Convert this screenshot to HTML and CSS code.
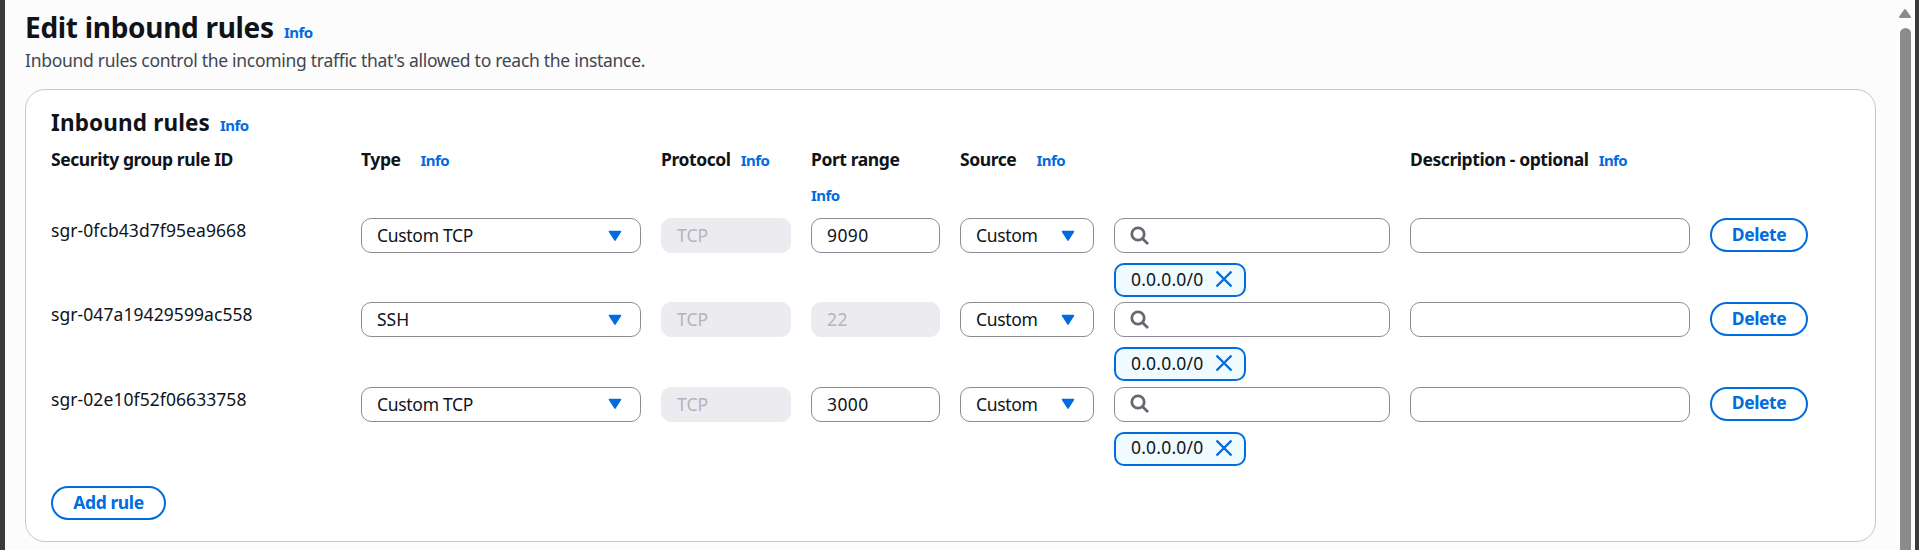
FILE: index.html
```
<!DOCTYPE html>
<html lang="en">
<head>
<meta charset="utf-8">
<title>Edit inbound rules</title>
<link rel="stylesheet" href="styles.css">
</head>
<body>
<svg class="defs" width="0" height="0">
  <symbol id="caret" viewBox="0 0 14 12"><path d="M1.5 1.5h11L7 10.2z"/></symbol>
  <symbol id="search" viewBox="0 0 20 20"><circle cx="8" cy="8" r="6.2"/><path d="M12.4 12.4l5.6 5.6"/></symbol>
  <symbol id="close" viewBox="0 0 18 18"><path d="M1.5 1.5l15 15M16.5 1.5l-15 15"/></symbol>
</svg>
<div class="window">
  <main class="page">
    <header class="page-header">
      <h1>Edit inbound rules</h1><a class="info">Info</a>
    </header>
    <p class="lead">Inbound rules control the incoming traffic that's allowed to reach the instance.</p>
    <section class="card">
      <div class="card-header"><h2>Inbound rules</h2><a class="info">Info</a></div>
      <div class="grid heads">
        <div class="head"><b>Security group rule ID</b></div>
        <div class="head wide"><b>Type</b><a class="info">Info</a></div>
        <div class="head"><b>Protocol</b><a class="info">Info</a></div>
        <div class="head stacked"><b>Port range</b><a class="info">Info</a></div>
        <div class="head wide"><b>Source</b><a class="info">Info</a></div>
        <div></div>
        <div class="head"><b>Description - optional</b><a class="info">Info</a></div>
      </div>
      <div class="grid rule">
        <div class="rule-id">sgr-0fcb43d7f95ea9668</div>
        <div class="field select"><span class="phrase">Custom TCP</span><svg class="caret"><use href="#caret"/></svg></div>
        <div class="field disabled"><span>TCP</span></div>
        <div class="field"><span class="num">9090</span></div>
        <div class="field select"><span class="word">Custom</span><svg class="caret"><use href="#caret"/></svg></div>
        <div class="source">
          <div class="field"><svg class="search"><use href="#search"/></svg></div>
          <div class="chip"><span>0.0.0.0/0</span><svg class="close"><use href="#close"/></svg></div>
        </div>
        <div class="field"></div>
        <button class="btn">Delete</button>
      </div>
      <div class="grid rule">
        <div class="rule-id">sgr-047a19429599ac558</div>
        <div class="field select"><span>SSH</span><svg class="caret"><use href="#caret"/></svg></div>
        <div class="field disabled"><span>TCP</span></div>
        <div class="field disabled"><span class="num">22</span></div>
        <div class="field select"><span class="word">Custom</span><svg class="caret"><use href="#caret"/></svg></div>
        <div class="source">
          <div class="field"><svg class="search"><use href="#search"/></svg></div>
          <div class="chip"><span>0.0.0.0/0</span><svg class="close"><use href="#close"/></svg></div>
        </div>
        <div class="field"></div>
        <button class="btn">Delete</button>
      </div>
      <div class="grid rule">
        <div class="rule-id">sgr-02e10f52f06633758</div>
        <div class="field select"><span class="phrase">Custom TCP</span><svg class="caret"><use href="#caret"/></svg></div>
        <div class="field disabled"><span>TCP</span></div>
        <div class="field"><span class="num">3000</span></div>
        <div class="field select"><span class="word">Custom</span><svg class="caret"><use href="#caret"/></svg></div>
        <div class="source">
          <div class="field"><svg class="search"><use href="#search"/></svg></div>
          <div class="chip"><span>0.0.0.0/0</span><svg class="close"><use href="#close"/></svg></div>
        </div>
        <div class="field"></div>
        <button class="btn">Delete</button>
      </div>
      <button class="btn add">Add rule</button>
    </section>
  </main>
  <div class="scrollbar">
    <svg class="arrow" viewBox="0 0 14 11"><path d="M7 2L12 9H2z"/></svg>
    <div class="thumb"></div>
  </div>
</div>
</body>
</html>
```
FILE: styles.css
```
* { box-sizing: border-box; }
html, body { margin: 0; height: 550px; overflow: hidden; }
body {
  font: 17.5px/25px "Noto Sans", "Open Sans", sans-serif;
  color: #0f141a;
  background: #3b3939;
}
h1, h2, p { margin: 0; }
.defs { display: none; }
.window {
  display: flex;
  height: 550px;
  margin: 0 4px 0 5px;
  background: #fcfcfd;
}
.page { width: 1895px; padding: 9px 0 0 20px; flex: none; }
.page-header { display: flex; align-items: baseline; height: 39px; }
h1 { font-size: 28px; line-height: 36px; letter-spacing: -0.3px; width: 259px; white-space: nowrap; }
.info { color: #006ce0; font-weight: 700; font-size: 15px; letter-spacing: -0.55px; }
.lead { color: #424650; line-height: 25px; letter-spacing: -0.29px; white-space: nowrap; }
.card {
  width: 1851px;
  height: 453px;
  margin-top: 16px;
  padding: 19px 25px;
  border: 1px solid #c6c6cd;
  border-radius: 20px;
  background: #fff;
}
.card-header { display: flex; align-items: baseline; height: 38px; }
h2 { font-size: 22.5px; line-height: 28px; letter-spacing: 0.15px; width: 169px; white-space: nowrap; }
.grid {
  display: grid;
  grid-template-columns: 290px 280px 130px 129px 134px 276px 280px 98px;
  column-gap: 20px;
  align-items: start;
}
.heads { height: 71px; }
.head { display: flex; gap: 10px; align-items: baseline; white-space: nowrap; }
.head.wide { gap: 20px; }
.head.stacked { flex-direction: column; gap: 11px; }
.head b { letter-spacing: -0.42px; }
.rule { height: 84.4px; }
.rule-id { line-height: 25px; letter-spacing: 0.07px; }
.field {
  display: flex;
  align-items: center;
  height: 35px;
  padding: 0 15px;
  border: 1px solid #8c8c94;
  border-radius: 10px;
  background: #fff;
}
.select { justify-content: space-between; padding-right: 18px; }
.disabled { border-color: #ebebf0; background: #ebebf0; color: #b4b4bb; }
.word { letter-spacing: -0.35px; }
.phrase { letter-spacing: -0.3px; }
.num { letter-spacing: 0.4px; }
.caret { width: 14px; height: 12px; fill: #006ce0; stroke: #006ce0; stroke-width: 1.5; stroke-linejoin: round; }
.search { width: 20px; height: 20px; fill: none; stroke: #656871; stroke-width: 2.8; }
.chip {
  display: flex;
  align-items: center;
  justify-content: space-between;
  width: 132px;
  height: 34px;
  margin-top: 10px;
  padding: 0 11px 2px 15px;
  border: 2px solid #006ce0;
  border-radius: 10px;
  background: #f0fbff;
  letter-spacing: 0.2px;
}
.close { width: 18px; height: 18px; fill: none; stroke: #006ce0; stroke-width: 2.4; }
.btn {
  width: 98px;
  height: 34px;
  padding: 0 0 2px;
  border: 2px solid #006ce0;
  border-radius: 17px;
  background: #fff;
  color: #006ce0;
  font: 700 17.5px/25px "Noto Sans", "Open Sans", sans-serif;
  letter-spacing: -0.4px;
}
.add { display: block; width: 115px; margin-top: 15px; }
.scrollbar { width: 15px; padding: 8px 3px 0 0; margin-left: -1px; display: flex; flex-direction: column; align-items: flex-end; }
.arrow { flex: none; width: 14px; height: 11px; margin-right: -1px; fill: #8b8b8b; stroke: #8b8b8b; stroke-width: 2; stroke-linejoin: round; }
.thumb { width: 11px; height: 540px; margin-top: 9px; border-radius: 6px; background: #8b8b8b; flex: none; }
```
